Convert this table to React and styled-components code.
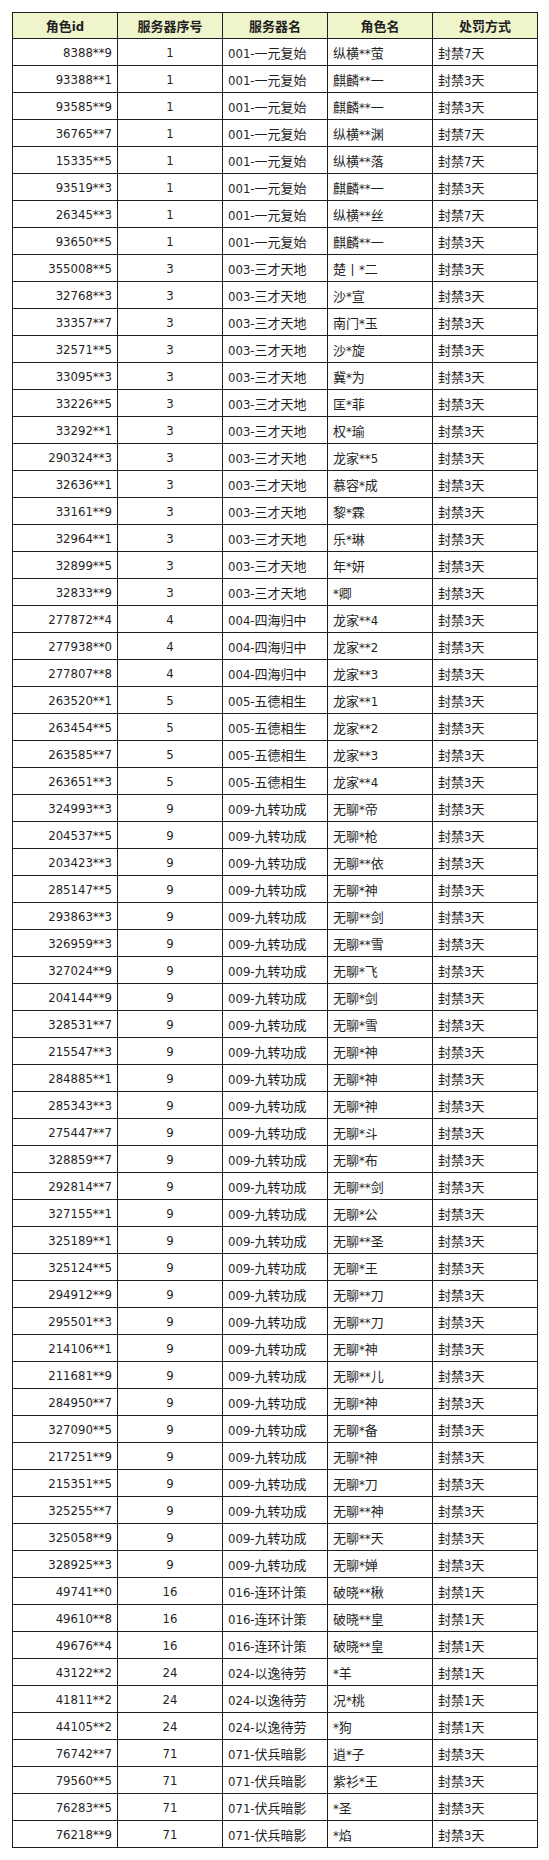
import React from "react";
import styled, { createGlobalStyle } from "styled-components";

const GlobalStyle = createGlobalStyle`
  html, body {
    margin: 0;
    padding: 0;
    background: #ffffff;
  }
  body {
    font-family: "DejaVu Sans Condensed", "DejaVu Sans", "Noto Sans CJK SC", sans-serif;
  }
`;

const Page = styled.div`
  padding: 12px 0 0 12px;
  width: 549px;
  box-sizing: border-box;
`;

const Table = styled.table`
  border-collapse: collapse;
  table-layout: fixed;
  width: 525px;
  font-family: "DejaVu Sans Condensed", "DejaVu Sans", "Noto Sans CJK SC", sans-serif;
  font-size: 13px;
  color: #1f1f1f;
`;

const Col = styled.col`
  width: 105px;
`;

const HeadCell = styled.th`
  background: #eff4cb;
  border: 1px solid #1e1e1e;
  height: 25px;
  padding: 0 4px;
  font-weight: bold;
  text-align: center;
  color: #1f1f1f;
  white-space: nowrap;
`;

const Cell = styled.td`
  border: 1px solid #1e1e1e;
  height: 26px;
  padding: 0 5px;
  text-align: ${(p) => p.$align || "left"};
  white-space: nowrap;
  overflow: hidden;
`;

const headers = ["角色id", "服务器序号", "服务器名", "角色名", "处罚方式"];

const rows = [
  ["8388**9", "1", "001-一元复始", "纵横**萤", "封禁7天"],
  ["93388**1", "1", "001-一元复始", "麒麟**一", "封禁3天"],
  ["93585**9", "1", "001-一元复始", "麒麟**一", "封禁3天"],
  ["36765**7", "1", "001-一元复始", "纵横**渊", "封禁7天"],
  ["15335**5", "1", "001-一元复始", "纵横**落", "封禁7天"],
  ["93519**3", "1", "001-一元复始", "麒麟**一", "封禁3天"],
  ["26345**3", "1", "001-一元复始", "纵横**丝", "封禁7天"],
  ["93650**5", "1", "001-一元复始", "麒麟**一", "封禁3天"],
  ["355008**5", "3", "003-三才天地", "楚丨*二", "封禁3天"],
  ["32768**3", "3", "003-三才天地", "沙*宣", "封禁3天"],
  ["33357**7", "3", "003-三才天地", "南门*玉", "封禁3天"],
  ["32571**5", "3", "003-三才天地", "沙*旋", "封禁3天"],
  ["33095**3", "3", "003-三才天地", "冀*为", "封禁3天"],
  ["33226**5", "3", "003-三才天地", "匡*菲", "封禁3天"],
  ["33292**1", "3", "003-三才天地", "权*瑜", "封禁3天"],
  ["290324**3", "3", "003-三才天地", "龙家**5", "封禁3天"],
  ["32636**1", "3", "003-三才天地", "慕容*成", "封禁3天"],
  ["33161**9", "3", "003-三才天地", "黎*霖", "封禁3天"],
  ["32964**1", "3", "003-三才天地", "乐*琳", "封禁3天"],
  ["32899**5", "3", "003-三才天地", "年*妍", "封禁3天"],
  ["32833**9", "3", "003-三才天地", "*卿", "封禁3天"],
  ["277872**4", "4", "004-四海归中", "龙家**4", "封禁3天"],
  ["277938**0", "4", "004-四海归中", "龙家**2", "封禁3天"],
  ["277807**8", "4", "004-四海归中", "龙家**3", "封禁3天"],
  ["263520**1", "5", "005-五德相生", "龙家**1", "封禁3天"],
  ["263454**5", "5", "005-五德相生", "龙家**2", "封禁3天"],
  ["263585**7", "5", "005-五德相生", "龙家**3", "封禁3天"],
  ["263651**3", "5", "005-五德相生", "龙家**4", "封禁3天"],
  ["324993**3", "9", "009-九转功成", "无聊*帝", "封禁3天"],
  ["204537**5", "9", "009-九转功成", "无聊*枪", "封禁3天"],
  ["203423**3", "9", "009-九转功成", "无聊**依", "封禁3天"],
  ["285147**5", "9", "009-九转功成", "无聊*神", "封禁3天"],
  ["293863**3", "9", "009-九转功成", "无聊**剑", "封禁3天"],
  ["326959**3", "9", "009-九转功成", "无聊**雪", "封禁3天"],
  ["327024**9", "9", "009-九转功成", "无聊*飞", "封禁3天"],
  ["204144**9", "9", "009-九转功成", "无聊*剑", "封禁3天"],
  ["328531**7", "9", "009-九转功成", "无聊*雪", "封禁3天"],
  ["215547**3", "9", "009-九转功成", "无聊*神", "封禁3天"],
  ["284885**1", "9", "009-九转功成", "无聊*神", "封禁3天"],
  ["285343**3", "9", "009-九转功成", "无聊*神", "封禁3天"],
  ["275447**7", "9", "009-九转功成", "无聊*斗", "封禁3天"],
  ["328859**7", "9", "009-九转功成", "无聊*布", "封禁3天"],
  ["292814**7", "9", "009-九转功成", "无聊**剑", "封禁3天"],
  ["327155**1", "9", "009-九转功成", "无聊*公", "封禁3天"],
  ["325189**1", "9", "009-九转功成", "无聊**圣", "封禁3天"],
  ["325124**5", "9", "009-九转功成", "无聊*王", "封禁3天"],
  ["294912**9", "9", "009-九转功成", "无聊**刀", "封禁3天"],
  ["295501**3", "9", "009-九转功成", "无聊**刀", "封禁3天"],
  ["214106**1", "9", "009-九转功成", "无聊*神", "封禁3天"],
  ["211681**9", "9", "009-九转功成", "无聊**儿", "封禁3天"],
  ["284950**7", "9", "009-九转功成", "无聊*神", "封禁3天"],
  ["327090**5", "9", "009-九转功成", "无聊*备", "封禁3天"],
  ["217251**9", "9", "009-九转功成", "无聊*神", "封禁3天"],
  ["215351**5", "9", "009-九转功成", "无聊*刀", "封禁3天"],
  ["325255**7", "9", "009-九转功成", "无聊**神", "封禁3天"],
  ["325058**9", "9", "009-九转功成", "无聊**天", "封禁3天"],
  ["328925**3", "9", "009-九转功成", "无聊*婵", "封禁3天"],
  ["49741**0", "16", "016-连环计策", "破晓**楸", "封禁1天"],
  ["49610**8", "16", "016-连环计策", "破晓**皇", "封禁1天"],
  ["49676**4", "16", "016-连环计策", "破晓**皇", "封禁1天"],
  ["43122**2", "24", "024-以逸待劳", "*羊", "封禁1天"],
  ["41811**2", "24", "024-以逸待劳", "况*桃", "封禁1天"],
  ["44105**2", "24", "024-以逸待劳", "*狗", "封禁1天"],
  ["76742**7", "71", "071-伏兵暗影", "逍*子", "封禁3天"],
  ["79560**5", "71", "071-伏兵暗影", "紫衫*王", "封禁3天"],
  ["76283**5", "71", "071-伏兵暗影", "*圣", "封禁3天"],
  ["76218**9", "71", "071-伏兵暗影", "*焰", "封禁3天"],
];

const aligns = ["right", "center", "left", "left", "left"];

export default function App() {
  return (
    <>
      <GlobalStyle />
      <Page>
        <Table>
          <colgroup>
            {headers.map((h) => (
              <Col key={h} />
            ))}
          </colgroup>
          <thead>
            <tr>
              {headers.map((h) => (
                <HeadCell key={h}>{h}</HeadCell>
              ))}
            </tr>
          </thead>
          <tbody>
            {rows.map((r, i) => (
              <tr key={i}>
                {r.map((c, j) => (
                  <Cell key={j} $align={aligns[j]}>
                    {c}
                  </Cell>
                ))}
              </tr>
            ))}
          </tbody>
        </Table>
      </Page>
    </>
  );
}
